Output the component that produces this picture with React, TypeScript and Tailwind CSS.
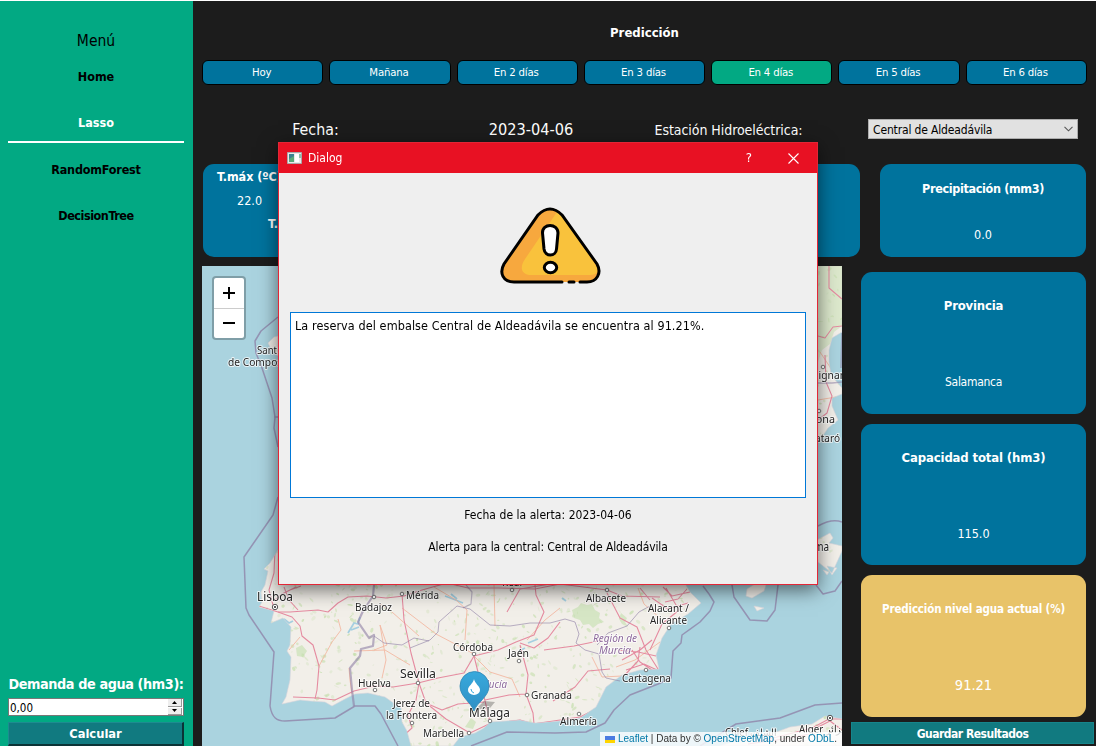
import React from "react";

const days = ["Hoy", "Mañana", "En 2 días", "En 3 días", "En 4 días", "En 5 días", "En 6 días"];

const LAND =
  "M278 550L270 563L264 569L268 571L265 585L261 592L262 602L259 607L274 611L271 623L283 618L291 627L290 645L287 651L291 657L290 680L286 697L282 704L300 700L310 701L325 702L332 706L345 699L355 694L368 693L385 697L395 704L401 708L402 722L407 731L411 746L453 746L460 737L475 733L484 728L490 722L520 720L535 723L560 721L580 718L596 707L606 687L622 675L640 670L659 669L656 655L662 638L671 624L688 614L701 603L690 592L683 580L683 266L842 266L842 332L832 338L829 350L829 362L831 375L842 388L842 394L832 398L832 406L838 420L828 428L820 440L683 560L278 560Z";
const ISLANDS =
  "M746 596L747 589L758 582L766 585L764 591L752 598Z M754 606L764 608L757 611Z M815 541L830 533L833 538L829 543L842 546L842 551L832 573L818 562Z M827 566L832 575L837 568Z M823 570L829 572L827 575Z M720 746L735 741L760 738L790 727L812 724L825 716L842 719L842 746Z M278 336L274 337L268 343L272 351L278 356Z";

const borders =
  "M278 317L261 331L255 341L256 353L262 368L272 398L275 417L274 428L278 447 M274 417H279 M278 497L273 515L244 557L246 608L249 615L274 652L270 706C272 718 277 721 285 721L335 718L355 706H375L381 714L398 746 M471 746L507 732L555 733L586 732L605 723L614 710L630 695L658 684L671 678L673 651L681 643L682 635L700 622L710 611L714 602L709 594L703 586 M732 585L734 597L750 620L767 621L775 610L778 585 M816 585L823 594L835 591L842 581 M818 526Q832 518 842 522 M700 746L736 724L780 718L815 705L842 703";
const regions =
  "M410 648L430 640L438 632L439 622L457 606L470 609L490 625L510 626L530 623L550 623L565 619L575 622L579 634L576 643L585 650L599 654L602 672L606 678L620 681 M597 645L608 633L627 626L639 612L650 606 M374 636L384 643L402 645L414 638L429 641";
const roads = [
  "M259 606L278 612L290 612L318 610L328 612L338 603L348 597L367 596L386 598L404 596L422 590L447 583L468 588L499 588L535 589L560 584L607 590L622 596L660 597",
  "M278 612L292 617L300 626L302 636L313 645L319 666L317 690L315 699",
  "M293 697L318 698L335 700L354 691L375 686L393 687L418 683L438 678L464 673L474 656L498 650L516 642L534 635L544 612L536 595L535 585",
  "M402 594L404 620L411 653L419 683L426 703L446 719L470 733L489 724L520 720L533 724L560 720L580 717L598 708L612 690L625 678",
  "M474 656L481 684L490 722 M485 700L509 695L526 694L528 675L520 645 M526 694L533 713L534 724",
  "M553 701L575 687L588 671L610 669 M607 593L620 618L637 627L646 650L658 669",
  "M273 605L269 590L274 573L275 550 M275 600L282 594L296 587 M290 590L301 586 M284 587L289 600L298 610",
  "M507 612L520 589L550 584 M428 704L442 710L458 704L484 702 M544 650L574 646L603 640",
  "M666 588L679 610L662 624L650 650 M687 589L678 599L665 602 M640 588L650 600 M652 598L668 609L688 603 M663 587L672 596L690 592",
  "M632 650L640 662L655 672 M640 647L638 661L622 678 M622 660L640 650L652 640 M618 650L638 652L656 656 M626 670L644 664L657 670",
  "M829 266L829 288L842 299 M818 336L825 338L833 327L842 326 M825 355L826 382L832 396L827 413L818 420",
  "M760 741L785 735L812 728L829 719L842 719 M748 744L790 738L815 733 M818 727L830 721L842 730",
  "M402 737L412 728L408 715L416 700L419 683 M520 643L534 648L548 638L560 622",
];
const minorRoads =
  "M338 619L341 630L332 642L319 666 M289 650L300 637 M374 650L387 645L380 625L386 660L382 678 M380 604L392 612L419 636 M434 587L456 600L467 610L465 640 M494 585L495 626 M475 657L490 672L512 679L520 697 M560 608L545 620L527 640 M592 657L602 677L622 676 M354 651L385 650L410 665 M616 667L635 660L660 642 M638 588L644 604L660 618 M402 608L436 634L474 654 M352 694L350 680L349 668 M818 400L842 396 M820 352L832 370";

type Label = [string, number, number, number, number?, boolean?];
const labels: Label[] = [
  ["Sant", 257, 354, 20],
  ["de Compostela", 228, 366, 72],
  ["Lisboa", 257, 601, 36, 12],
  ["Badajoz", 355, 611, 37],
  ["Mérida", 406, 599, 33],
  ["Real", 502, 586, 20],
  ["Albacete", 586, 602, 40],
  ["Alacant /", 648, 612, 41],
  ["Alicante", 650, 624, 37],
  ["Región de", 593, 642, 44, 10, true],
  ["Murcia", 599, 654, 32, 10, true],
  ["Andalucía", 464, 688, 43, 10, true],
  ["Córdoba", 453, 651, 40],
  ["Jaén", 508, 657, 21],
  ["Sevilla", 400, 678, 36, 12],
  ["Huelva", 358, 687, 33],
  ["Jerez de", 393, 707, 37],
  ["la Frontera", 386, 719, 51],
  ["Granada", 531, 699, 41],
  ["Málaga", 469, 717, 41, 12],
  ["Marbella", 423, 737, 41],
  ["Almería", 560, 725, 37],
  ["Cartagena", 622, 682, 49],
  ["Perpignan", 796, 379, 50],
  ["Girona", 801, 423, 34],
  ["Mataró", 806, 442, 34],
  ["Palma", 800, 551, 29, 12],
  ["Chlef الشلف", 725, 736, 52],
  ["Alger الجزائر", 799, 733, 54, 11],
];
const towns = [
  [374, 597], [402, 594], [512, 590], [607, 590], [669, 628], [474, 654], [519, 661], [418, 683],
  [375, 690], [412, 723], [527, 695], [490, 721], [469, 733], [579, 714], [646, 670], [823, 367], [819, 411],
];

const woods = Array.from({ length: 2600 }, (_, i) => {
  const r = (n: number) => {
    const v = Math.sin(i * 12.9898 + n * 78.233) * 43758.5453;
    return v - Math.floor(v);
  };
  const x = 258 + r(1) * 584;
  const y = 266 + r(2) * 480;
  return { x, y, w: 0.5 + r(3) * 2.4, h: 0.4 + r(4) * 1.3, a: r(5) * 180, o: 0.2 + r(6) * 0.5 };
}).filter((w) => w.x > 815 || (w.y > 580 && w.x < 705) || w.x < 282 || w.y > 715);

function IberiaMap() {
  return (
    <svg className="block h-[480px] w-[640px]" viewBox="202 266 640 480" fontFamily='"Noto Sans", sans-serif'>
      <defs>
        <clipPath id="land"><path d={LAND + ISLANDS} /></clipPath>
        <linearGradient id="pin" x1="0" x2="0" y1="0" y2="1">
          <stop stopColor="#38a9dc" /><stop offset="1" stopColor="#2f8fc4" />
        </linearGradient>
      </defs>
      <path fill="#aad3df" d="M202 266h640v480H202z" />
      <path d={LAND + ISLANDS} fill="#f2efe9" stroke="#d9d5dc" strokeWidth=".6" />
      <g clipPath="url(#land)">
        {woods.map((w, i) => (
          <ellipse key={i} rx={w.w} ry={w.h} fill="#c3deaa" opacity={w.o} transform={`translate(${w.x} ${w.y}) rotate(${w.a})`} />
        ))}
        <g fill="#c4dfae" opacity=".6">
          <path d="M572 610l6-3 3-4 6 2 5-1 3 6 5 3-1 5 5 4-6 2-5 4-4-4-6 1-3-5-6-2z M296 648l6-3 5 6-4 6-6-1z M465 727l6-9 5 4-3 7z M621 613l6 5-2 4 3 5-6-3-3-5z M480 690l6 3-2 5-5-2z" />
          <path d="M818 266h24v60l-8 6-4 12-8 6-4 12z" opacity=".8" />
        </g>
        <path d="M348 633l6-10 4 1 2-7M351 630l8-3M445 596l8 3 10 4M451 594l6 5M528 643l10-4M519 651l6-3M284 619l5 4 4-2M562 598l4 3" stroke="#a5cfe0" strokeWidth="1.8" fill="none" />
        <path d={minorRoads} fill="none" stroke="#f3b9a3" strokeWidth=".9" />
        <g fill="none" stroke="#e58ba0" strokeWidth="1.1" strokeLinejoin="round">
          {roads.map((d, i) => <path key={i} d={d} />)}
        </g>
      </g>
      <g fill="none" stroke="#8d7fa5" strokeLinejoin="round">
        <path d={borders} strokeWidth="1.5" opacity=".75" />
        <path d={regions} strokeWidth="1" opacity=".6" />
        <path d="M374 585L373 596L363 611L358 622L369 638L374 635L373 646L361 649L360 656L350 668L352 690L354 706" strokeWidth="2.2" opacity=".6" />
        <path d="M818 383L832 383L842 382M842 333L841 368" strokeWidth="1.6" opacity=".55" />
        <path d="M466 585L472 592L471 604L463 608" strokeWidth="1.2" opacity=".5" />
      </g>
      {towns.map(([x, y]) => <circle key={x} cx={x} cy={y} r="1.8" fill="#fff" stroke="#666" strokeWidth=".9" />)}
      {[[275, 607], [830, 718]].map(([x, y]) => (
        <g key={x}><circle cx={x} cy={y} r="2.7" fill="#fff" stroke="#444" strokeWidth=".9" /><circle cx={x} cy={y} r="1.1" fill="#333" /></g>
      ))}
      <path d="M475 710L484 701L495 702L490 708Z" fill="#000" opacity=".25" />
      {labels.map(([t, x, y, w, s = 10, region]) => (
        <text key={t + x} x={x} y={y} textLength={w} lengthAdjust="spacingAndGlyphs" fontSize={s} fill={region ? "#8d6a9d" : "#262626"} fontStyle={region ? "italic" : "normal"} stroke="#fff" strokeOpacity=".75" strokeWidth="2" paintOrder="stroke" strokeLinejoin="round">{t}</text>
      ))}
      <path d="M474 711C471 702 460 697 460 686A14.5 14.5 0 0 1 489 686C489 697 477 702 474 711Z" fill="url(#pin)" stroke="#2c86b5" strokeWidth=".8" />
      <path d="M474 679C475 684 480 686 480 690A6 5 0 0 1 468 690C468 686 473 684 474 679Z" fill="#fff" />
      <path d="M471 689Q471 692 474 693" fill="none" stroke="#38a9dc" />
    </svg>
  );
}

function WarningIcon() {
  return (
    <svg className="ml-[210px] block h-[78px] w-[102px]" viewBox="500 207 102 78">
      <path d="M538 214Q550 202 562 214L597 264C602 274 597 282 587 282H514C503 282 499 273 504 264Z" fill="#f7a83e" />
      <path d="M557 212L562 215L595 264C600 271 597 275 590 275H531C522 275 519 268 525 259Z" fill="#f9c23c" />
      <path d="M562 282H514C503 282 499 273 504 264L538 215Q550 203 562 215L597 264C602 273 597 282 587 282H580M569 282H574" fill="none" stroke="#000" strokeWidth="3" strokeLinecap="round" />
      <path d="M542.5 233C542 223 558 223 558 233L556.5 249C556 257 545 257 544 249Z" fill="#fff" stroke="#000" strokeWidth="3" />
      <ellipse cx="550.5" cy="267.5" rx="6.2" ry="5.2" fill="#fff" stroke="#000" strokeWidth="3" />
    </svg>
  );
}

function Card({ title, value, className, titleClass, valueClass }: { title: string; value: string; className: string; titleClass: string; valueClass: string }) {
  return (
    <section className={`flex flex-col items-center rounded-[11px] text-white ${className}`}>
      <h2 className={`whitespace-nowrap font-bold leading-4 ${titleClass}`}>{title}</h2>
      <p className={`leading-4 ${valueClass}`}>{value}</p>
    </section>
  );
}

function Sidebar() {
  return (
    <aside className="flex w-[193px] shrink-0 flex-col bg-[#02a983] pl-2 pr-[9px]">
      <h1 className="mt-[30px] text-center text-[15.5px] leading-5">Menú</h1>
      <nav className="flex flex-col text-center text-[12.5px] font-bold leading-4">
        <a className="mt-[18px]">Home</a>
        <a className="mt-[30px] border-b-2 border-white pb-[10px] text-white">Lasso</a>
        <a className="mt-[19px] tracking-[-0.2px]">RandomForest</a>
        <a className="mt-[30px] tracking-[-0.45px]">DecisionTree</a>
      </nav>
      <label className="mt-auto whitespace-nowrap text-center text-[14.3px] font-bold leading-[18px] tracking-[-0.4px] text-white">Demanda de agua (hm3):</label>
      <div className="mt-[5px] flex h-[18px] items-center justify-between border border-[#777] bg-white pl-[1px] text-[11.5px] leading-4">
        <span className="pt-[2px]">0,00</span>
        <span className="mr-px flex h-4 w-[14px] flex-col gap-px">
          <span className="flex flex-1 items-center justify-center border-b border-r border-[#999] bg-[#eee]"><svg className="h-[3px] w-[5px]" viewBox="0 0 5 3"><path d="M0 3L2.5 0L5 3Z" /></svg></span>
          <span className="flex flex-1 items-center justify-center border-b border-r border-[#999] bg-[#eee]"><svg className="h-[3px] w-[5px]" viewBox="0 0 5 3"><path d="M0 0H5L2.5 3Z" /></svg></span>
        </span>
      </div>
      <button className="mt-[6px] h-6 border-b-2 border-r-2 border-l border-t border-b-[#0b3336] border-r-[#0b3336] border-l-[#1d8c90] border-t-[#1d8c90] bg-[#117a80] pt-px text-[12.8px] font-bold leading-4 text-white">Calcular</button>
    </aside>
  );
}

function Dialog() {
  return (
    <div role="dialog" className="absolute left-[278px] top-[141px] flex h-[443px] w-[540px] flex-col border border-[#e32636] bg-[#efefef] text-[12px] shadow-[0_5px_18px_rgba(0,0,0,0.55)]">
      <header className="flex h-[30px] shrink-0 items-center bg-[#e81123] pl-2 text-[12px] text-white">
        <svg className="h-3 w-[15px]" viewBox="0 0 15 12"><path fill="#e9e9e9" stroke="#a9a9a9" d="M.5.5h14v11H.5z" /><path fill="#3b8191" d="M2 2h5v8H2z" /><path fill="#59a977" d="M2 7l5-3v6H2z" /><path fill="#fff" d="M8 2h4v8H8z" /><path fill="#8ebfab" d="M12 2h2v4h-2z" /></svg>
        <span className="ml-[6px]">Dialog</span>
        <span className="ml-auto mr-[36px] text-[13px]">?</span>
        <svg className="mr-[18px] h-[11px] w-[11px]" viewBox="0 0 11 11"><path d="M.5.5l10 10M10.5.5l-10 10" stroke="#fff" strokeWidth="1.1" /></svg>
      </header>
      <div className="flex flex-1 flex-col px-[11px] pt-[34px]">
        <WarningIcon />
        <div className="mt-[27px] h-[186px] border border-[#0078d7] bg-white px-1 pt-[5px] text-[12.5px] leading-4 tracking-[0.09px]">La reserva del embalse Central de Aldeadávila se encuentra al 91.21%.</div>
        <p className="mt-[9px] text-center leading-4 tracking-[0.04px]">Fecha de la alerta: 2023-04-06</p>
        <p className="mt-4 text-center leading-4 tracking-[-0.1px]">Alerta para la central: Central de Aldeadávila</p>
      </div>
    </div>
  );
}

export default function App() {
  return (
    <div className="relative flex h-[746px] w-[1096px] overflow-hidden border-t border-white bg-[#1c1c1c] font-['DejaVu_Sans_Condensed','DejaVu_Sans',sans-serif] text-black [font-stretch:condensed]">
      <Sidebar />
      <main className="flex min-w-0 flex-1 flex-col pl-[9px]">
        <h1 className="mt-6 pr-[9px] text-center text-[13px] font-bold leading-4 text-white">Predicción</h1>
        <div className="mr-[9px] mt-[19px] grid grid-cols-7 gap-[6px]">
          {days.map((d) => (
            <button key={d} className={`h-[25px] rounded-[6px] border border-black pr-[2px] pt-px text-[11.3px] leading-4 tracking-[-0.2px] text-white ${d === "En 4 días" ? "bg-[#02a983]" : "bg-[#00739d]"}`}>{d}</button>
          ))}
        </div>
        <div className="mt-[33px] flex h-[22px] items-center whitespace-nowrap text-white">
          <span className="w-[227px] pt-[2px] text-center text-[15.8px]">Fecha:</span>
          <span className="w-[204px] pt-[3px] text-center text-[16.2px]">2023-04-06</span>
          <span className="w-[191px] pt-[2px] text-center text-[14px] tracking-[-0.05px]">Estación Hidroeléctrica:</span>
          <div className="ml-auto mr-[18px] flex h-5 w-[210px] items-center justify-between border border-[#adadad] bg-[#e1e1e1] pl-1 pr-1 text-[12px] tracking-[-0.15px] text-black">
            <span className="pt-px">Central de Aldeadávila</span>
            <svg className="h-[6px] w-[9px]" viewBox="0 0 9 6"><path d="M.5.8L4.5 4.8L8.5.8" fill="none" stroke="#555" strokeWidth="1.1" /></svg>
          </div>
        </div>
        <div className="ml-px mt-[24px] flex gap-5 text-white">
          <section className="h-[93px] w-[657px] rounded-[11px] bg-[#00739d] pl-[14px] pt-[5px] text-[12.5px] leading-4">
            <h2 className="font-bold tracking-[-0.05px]">T.máx (ºC)</h2>
            <p className="ml-5 mt-2">22.0</p>
            <h2 className="ml-[51px] mt-[7px] font-bold">T.mín (ºC)</h2>
          </section>
          <Card title="Precipitación (mm3)" value="0.0" className="h-[93px] w-[206px] bg-[#00739d] pt-[17px]" titleClass="text-[12.5px] tracking-[-0.35px]" valueClass="text-[12.5px] mt-[30px]" />
        </div>
        <div className="flex min-h-0 flex-1">
          <div className="relative mt-[9px] h-[480px] w-[640px] shrink-0">
            <IberiaMap />
            <div className="absolute left-[10px] top-[10px] flex h-[64px] w-[34px] flex-col rounded-[4px] border-2 border-black/25 bg-white bg-clip-padding">
              <button className="flex flex-1 items-center justify-center border-b border-[#ccc]"><svg className="h-3 w-3" viewBox="0 0 12 12"><path d="M0 6h12M6 0v12" stroke="#000" strokeWidth="2" /></svg></button>
              <button className="flex flex-1 items-center justify-center"><svg className="h-3 w-3" viewBox="0 0 12 12"><path d="M0 6h12" stroke="#000" strokeWidth="2" /></svg></button>
            </div>
            <div className="absolute bottom-0 right-0 flex h-[14px] w-[242px] items-center whitespace-nowrap bg-white/80 pl-[5px] font-['Liberation_Sans',sans-serif] text-[10px] leading-[14px] text-[#333]">
              <svg className="mr-[3px] h-[7px] w-[10px]" viewBox="0 0 10 7"><path fill="#4c7be1" d="M0 0h10v4H0z" /><path fill="#ffd500" d="M0 4h10v3H0z" /></svg>
              <span><a className="text-[#0078a8]">Leaflet</a> | Data by © <a className="text-[#0078a8]">OpenStreetMap</a>, under <a className="text-[#0078a8]">ODbL</a>.</span>
            </div>
          </div>
          <div className="ml-[9px] mt-[15px] flex w-[243px] flex-col">
            <div className="ml-[10px] flex w-[225px] flex-col gap-[10px]">
              <Card title="Provincia" value="Salamanca" className="h-[142px] bg-[#00739d] pt-[26px]" titleClass="text-[13px] tracking-[-0.2px]" valueClass="text-[12px] mt-[60px] tracking-[-0.3px]" />
              <Card title="Capacidad total (hm3)" value="115.0" className="h-[141px] bg-[#00739d] pt-[26px]" titleClass="text-[13px] tracking-[-0.15px]" valueClass="text-[12.5px] mt-[60px]" />
              <Card title="Predicción nivel agua actual (%)" value="91.21" className="h-[142px] bg-[#e8c369] pt-[26px]" titleClass="text-[11.5px] tracking-[-0.16px]" valueClass="text-[14.5px] mt-[60px]" />
            </div>
            <button className="mt-[5px] h-[22px] border border-[#16858b] bg-[#117a80] pt-[2px] text-[12px] font-bold leading-4 tracking-[-0.5px] text-white">Guardar Resultados</button>
          </div>
        </div>
      </main>
      <Dialog />
    </div>
  );
}
